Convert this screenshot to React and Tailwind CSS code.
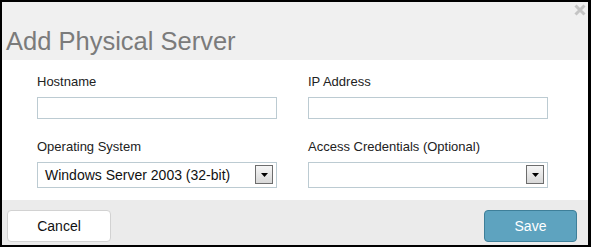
function Field({ label, children }) {
  return (
    <div className="flex flex-col">
      <label className="text-[13px] leading-[15px] text-[#222]">{label}</label>
      <div className="mt-[8px]">{children}</div>
    </div>
  );
}

function TextBox() {
  return <input type="text" className="block w-[240px] h-[22px] border border-[#bccbd2] bg-white outline-none" />;
}

function SelectBox({ value }) {
  return (
    <div className="relative flex items-center w-[240px] h-[26px] border border-[#bccbd2] bg-white">
      <span className="pl-[7px] text-[14px] text-[#111]">{value}</span>
      {/* arrow button */}
      <div className="absolute right-[3px] top-[2px] w-[18px] h-[19px] border border-[#6d6d6d] bg-gradient-to-b from-[#f6f6f6] to-[#d8d8d8] flex items-center justify-center">
        <svg width="7" height="4" viewBox="0 0 7 4">
          <path d="M0 0h7L3.5 4z" fill="#000" />
        </svg>
      </div>
    </div>
  );
}

export default function App() {
  return (
    <div className="w-[591px] h-[247px] bg-black pt-[2px] pl-[2px] pr-[3px] pb-[2px] font-['Liberation_Sans',Arial,sans-serif]">
      <div className="flex flex-col h-full">
        {/* Header */}
        <div className="relative h-[58px] bg-[#f0f0f0] flex items-end">
          <h1 className="pl-[4px] pb-[5px] text-[25.5px] leading-[28px] text-[#7b7b7b]">Add Physical Server</h1>
          <svg className="absolute right-[2px] top-[2px]" width="12" height="12" viewBox="0 0 12 12">
            <path d="M1.5 1.5l9 9M10.5 1.5l-9 9" stroke="#c4c4c4" strokeWidth="3" />
          </svg>
        </div>

        {/* Body */}
        <div className="h-[140px] bg-white pt-[14px] pl-[35px] grid grid-cols-[240px_240px] gap-x-[31px] gap-y-[20px] content-start">
          <Field label="Hostname"><TextBox /></Field>
          <Field label="IP Address"><TextBox /></Field>
          <Field label="Operating System"><SelectBox value="Windows Server 2003 (32-bit)" /></Field>
          <Field label="Access Credentials (Optional)"><SelectBox value="" /></Field>
        </div>

        {/* Footer */}
        <div className="flex-1 bg-[#ebebeb] flex items-start justify-between pt-[10px] pl-[5px] pr-[11px]">
          <button className="w-[104px] h-[32px] rounded-[4px] border border-[#d2d2d2] bg-white text-[14px] text-[#111]">Cancel</button>
          <button className="w-[93px] h-[32px] rounded-[4px] border border-[#3e7f99] bg-[#5ea3bf] text-[14px] text-white">Save</button>
        </div>
      </div>
    </div>
  );
}
